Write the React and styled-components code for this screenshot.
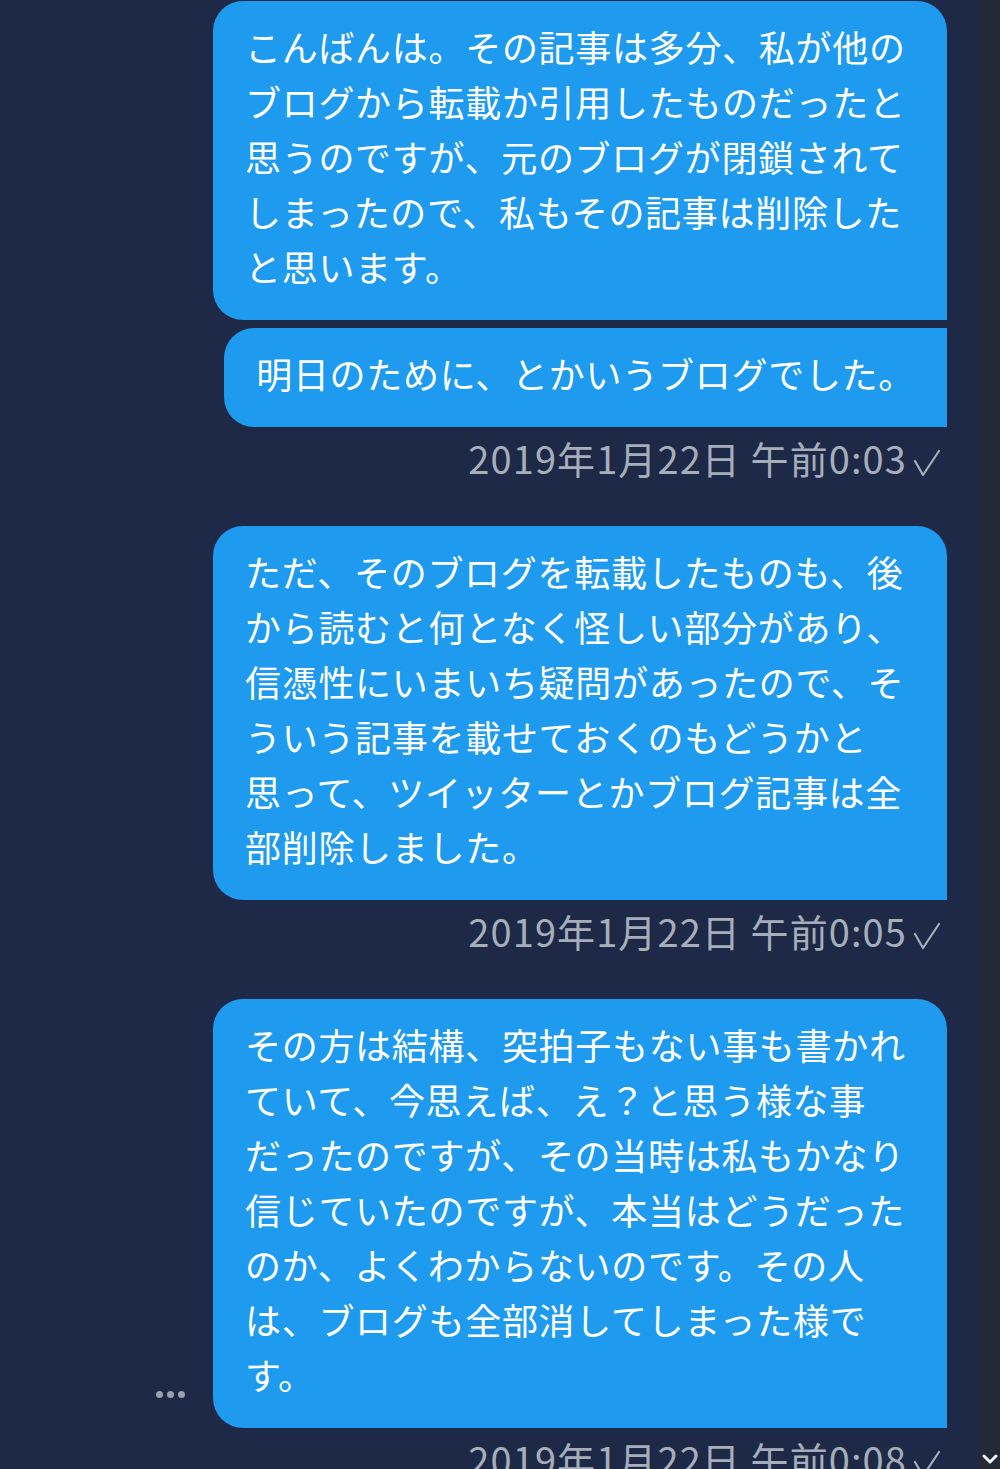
import React from "react";
import styled, { createGlobalStyle } from "styled-components";

const GlobalStyle = createGlobalStyle`
  html, body {
    margin: 0;
    padding: 0;
    background: #1d2946;
    overflow: hidden;
  }
  body {
    font-family: "Noto Sans CJK JP", "Noto Sans", sans-serif;
  }
`;

const Screen = styled.div`
  display: flex;
  width: 1000px;
  height: 1469px;
  overflow: hidden;
  background: #1d2946;
`;

const Thread = styled.div`
  flex: 1;
  display: flex;
  flex-direction: column;
  align-items: flex-end;
  padding: 0 32px 0 0;
`;

const ScrollTrack = styled.div`
  width: 21px;
  flex-shrink: 0;
  background: #242a35;
  display: flex;
  flex-direction: column;
  justify-content: flex-end;
  align-items: center;
  padding-bottom: 4px;
  box-sizing: border-box;
`;

const Group = styled.div`
  display: flex;
  flex-direction: column;
  align-items: flex-end;
  gap: 8px;
  margin-top: ${(p) => p.$top || 0}px;
`;

const Row = styled.div`
  display: flex;
  align-items: flex-end;
  gap: 28px;
`;

const Bubble = styled.div`
  background: #1e9bef;
  color: #ffffff;
  font-size: 36px;
  line-height: 55px;
  letter-spacing: 0.7px;
  width: ${(p) => (p.$wide ? "670px" : "auto")};
  padding: 18px 32px 26px 32px;
  border-radius: 30px;
  border-top-right-radius: ${(p) => (p.$first ? "30px" : "0")};
  border-bottom-right-radius: 0;
`;

const Line = styled.span`
  display: block;
  white-space: nowrap;
`;

const Stamp = styled.div`
  display: flex;
  align-items: center;
  gap: 6px;
  height: 40px;
  margin-top: 2px;
  margin-right: 6px;
  color: #a6aeba;
  font-size: 38px;
  letter-spacing: 1.1px;
`;

const Dots = styled.div`
  display: flex;
  gap: 4px;
  margin-bottom: 30px;
  span {
    width: 7px;
    height: 7px;
    border-radius: 50%;
    background: #9aa1ad;
  }
`;

const Check = () => (
  <svg width="28" height="30" viewBox="0 0 28 30" style={{ marginTop: 14 }}>
    <polyline
      points="2,12 10,26 26,2"
      fill="none"
      stroke="#a6aeba"
      strokeWidth="2.2"
      strokeLinecap="round"
      strokeLinejoin="round"
    />
  </svg>
);

const Chevron = () => (
  <svg width="16" height="12" viewBox="0 0 16 12">
    <polyline
      points="2,3 8,9 14,3"
      fill="none"
      stroke="#f2f4f7"
      strokeWidth="3"
      strokeLinecap="round"
      strokeLinejoin="round"
    />
  </svg>
);

const messages = [
  {
    bubbles: [
      [
        "こんばんは。その記事は多分、私が他の",
        "ブログから転載か引用したものだったと",
        "思うのですが、元のブログが閉鎖されて",
        "しまったので、私もその記事は削除した",
        "と思います。",
      ],
      ["明日のために、とかいうブログでした。"],
    ],
    time: "2019年1月22日 午前0:03",
    top: 1,
  },
  {
    bubbles: [
      [
        "ただ、そのブログを転載したものも、後",
        "から読むと何となく怪しい部分があり、",
        "信憑性にいまいち疑問があったので、そ",
        "ういう記事を載せておくのもどうかと",
        "思って、ツイッターとかブログ記事は全",
        "部削除しました。",
      ],
    ],
    time: "2019年1月22日 午前0:05",
    top: 49,
  },
  {
    bubbles: [
      [
        "その方は結構、突拍子もない事も書かれ",
        "ていて、今思えば、え？と思う様な事",
        "だったのですが、その当時は私もかなり",
        "信じていたのですが、本当はどうだった",
        "のか、よくわからないのです。その人",
        "は、ブログも全部消してしまった様で",
        "す。",
      ],
    ],
    time: "2019年1月22日 午前0:08",
    top: 49,
    more: true,
  },
];

export default function App() {
  return (
    <>
      <GlobalStyle />
      <Screen>
        <Thread>
          {messages.map((m, i) => (
            <Group key={i} $top={m.top}>
              {m.bubbles.map((lines, j) => (
                <Row key={j}>
                  {m.more && (
                    <Dots>
                      <span />
                      <span />
                      <span />
                    </Dots>
                  )}
                  <Bubble $first={j === 0} $wide={lines.length > 1}>
                    {lines.map((l, k) => (
                      <Line key={k}>{l}</Line>
                    ))}
                  </Bubble>
                </Row>
              ))}
              <Stamp>
                {m.time}
                <Check />
              </Stamp>
            </Group>
          ))}
        </Thread>
        <ScrollTrack>
          <Chevron />
        </ScrollTrack>
      </Screen>
    </>
  );
}
